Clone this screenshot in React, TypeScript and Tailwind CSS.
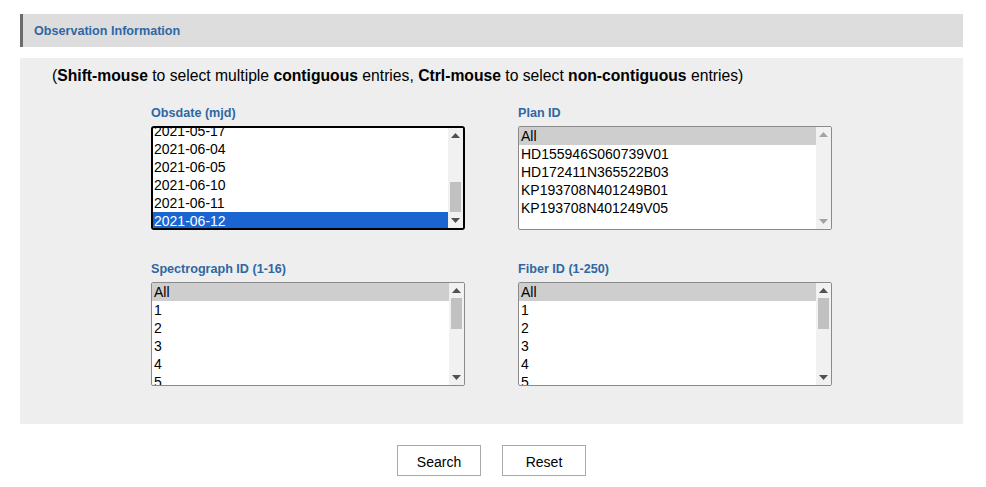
import React from "react";

type ListProps = {
  items: string[];
  highlighted?: string;
  selected?: string;
  focused?: boolean;
  offset?: string;
  thumb?: "none" | "bottom" | "top";
};

function UpArrow({ dim }: { dim?: boolean }) {
  return (
    <svg width="9" height="5" viewBox="0 0 9 5" className="mx-auto">
      <path d="M0 5 L4.5 0 L9 5 Z" fill={dim ? "#a3a3a3" : "#505050"} />
    </svg>
  );
}

function DownArrow({ dim }: { dim?: boolean }) {
  return (
    <svg width="9" height="5" viewBox="0 0 9 5" className="mx-auto">
      <path d="M0 0 L4.5 5 L9 0 Z" fill={dim ? "#a3a3a3" : "#505050"} />
    </svg>
  );
}

// fake listbox so the scrollbar looks the same as the screenshot
function ListBox({ items, highlighted, selected, focused, offset = "", thumb = "none" }: ListProps) {
  return (
    <div
      className={
        "flex h-[104px] w-[314px] overflow-hidden bg-white " +
        (focused ? "rounded-[3px] border-2 border-black" : "rounded-[2px] border border-[#8a8a8a]")
      }
    >
      <div className="flex-1 overflow-hidden">
        <div className={offset}>
          {items.map((item) => (
            <div
              key={item}
              className={
                "h-[18px] text-[14px] leading-[18px] whitespace-nowrap " +
                (focused ? "px-[1px] " : "px-[2px] ") +
                (item === selected
                  ? "bg-[#1b65d3] text-white"
                  : item === highlighted
                  ? "bg-[#cecece] text-black"
                  : "text-black")
              }
            >
              {item}
            </div>
          ))}
        </div>
      </div>
      <div className="flex w-[15px] flex-col bg-[#f1f1f1]">
        <div className="flex h-[15px] items-center">
          <UpArrow dim={thumb === "none"} />
        </div>
        <div className="flex flex-1 flex-col px-[2px]">
          {thumb === "bottom" && <div className="mt-auto mb-[1px] h-[30px] bg-[#c1c1c1]" />}
          {thumb === "top" && <div className="h-[31px] bg-[#c1c1c1]" />}
        </div>
        <div className="flex h-[15px] items-center">
          <DownArrow dim={thumb === "none"} />
        </div>
      </div>
    </div>
  );
}

function Field({ label, children }: { label: string; children: React.ReactNode }) {
  return (
    <div className="flex flex-col">
      <div className="mb-[7px] h-[12px] text-[12.6px] leading-[12px] font-bold text-[#2f67a4]">{label}</div>
      {children}
    </div>
  );
}

export default function App() {
  const nums = ["All", "1", "2", "3", "4", "5", "6"];

  return (
    <div className="min-h-[487px] bg-white pr-[23px] pl-5 pt-[14px] font-['Liberation_Sans',Arial,sans-serif] text-black">
      {/* section header */}
      <div className="flex h-[33px] items-center border-l-[3px] border-[#6b6b6b] bg-[#dddddd] pt-[2px] pl-[11px]">
        <span className="text-[12.6px] font-bold text-[#2f67a4]">Observation Information</span>
      </div>

      {/* panel with the four lists */}
      <div className="mt-[11px] h-[366px] bg-[#eeeeee] pt-[8px]">
        <p className="pl-[32px] text-[15.7px] leading-[20px]">
          (<b>Shift-mouse</b> to select multiple <b>contiguous</b> entries, <b>Ctrl-mouse</b> to select{" "}
          <b>non-contiguous</b> entries)
        </p>

        <div className="mx-auto mt-[21px] grid w-[681px] grid-cols-[314px_314px] gap-x-[53px] gap-y-[33px]">
          <Field label="Obsdate (mjd)">
            <ListBox
              focused
              offset="-mt-[6px]"
              thumb="bottom"
              selected="2021-06-12"
              items={["2021-05-17", "2021-06-04", "2021-06-05", "2021-06-10", "2021-06-11", "2021-06-12"]}
            />
          </Field>
          <Field label="Plan ID">
            <ListBox
              highlighted="All"
              items={[
                "All",
                "HD155946S060739V01",
                "HD172411N365522B03",
                "KP193708N401249B01",
                "KP193708N401249V05",
              ]}
            />
          </Field>
          <Field label="Spectrograph ID (1-16)">
            <ListBox highlighted="All" thumb="top" items={nums} />
          </Field>
          <Field label="Fiber ID (1-250)">
            <ListBox highlighted="All" thumb="top" items={nums} />
          </Field>
        </div>
      </div>

      {/* buttons */}
      <div className="mt-[21px] flex justify-center gap-[21px]">
        <button className="h-[31px] w-[84px] border border-[#a9a9a9] bg-white pt-[3px] text-[14px] text-black">Search</button>
        <button className="h-[31px] w-[84px] border border-[#a9a9a9] bg-white pt-[3px] text-[14px] text-black">Reset</button>
      </div>
    </div>
  );
}
